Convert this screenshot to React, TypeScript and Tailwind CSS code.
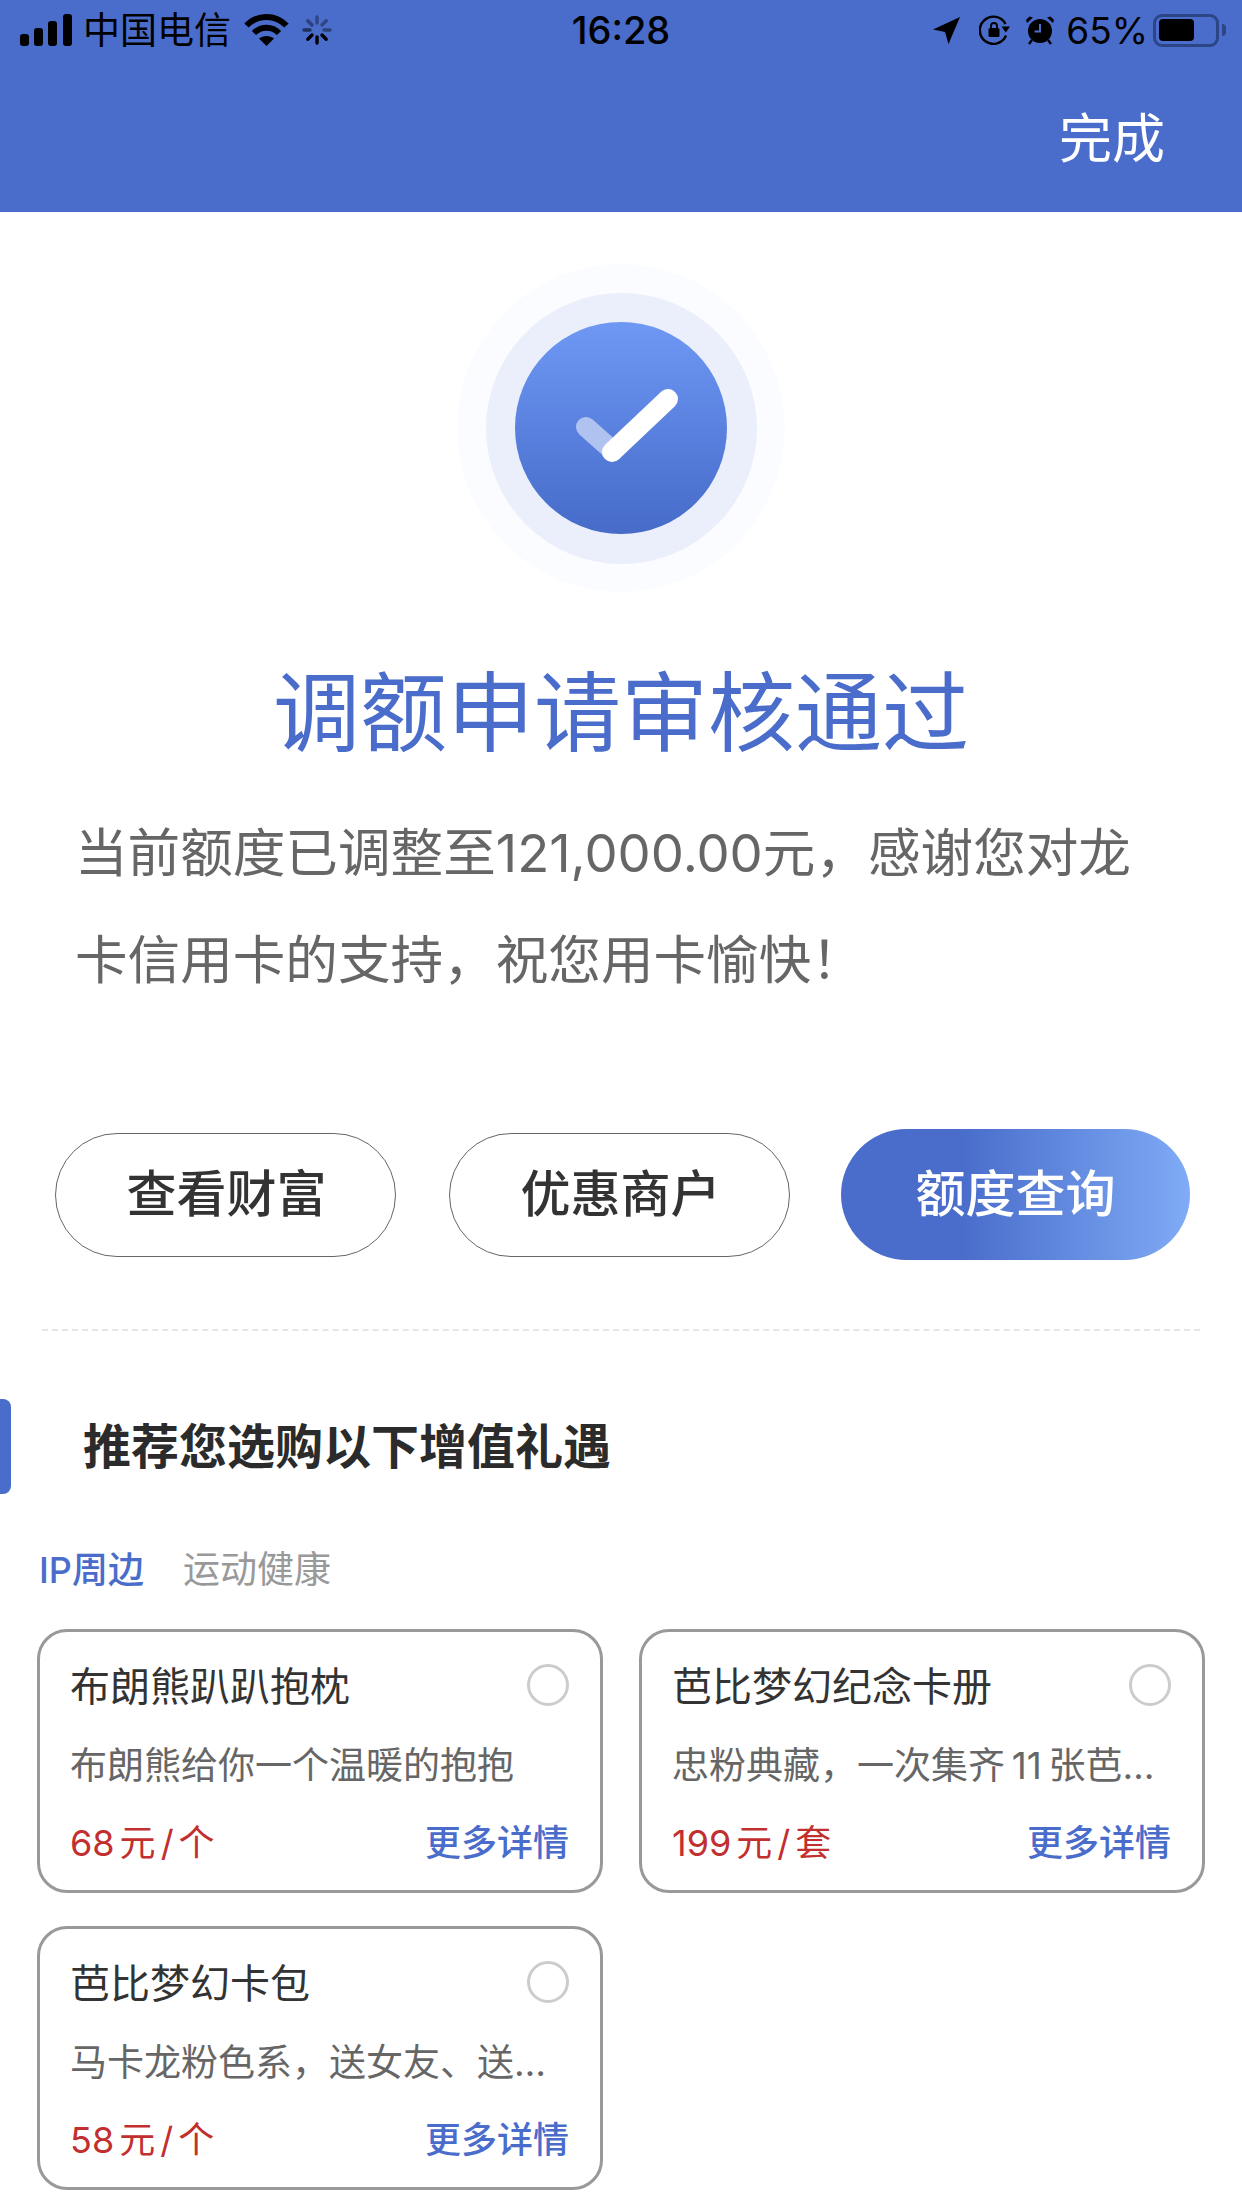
const font = "font-['Inter','Noto_Sans_CJK_SC',sans-serif]";

type Gift = {
  name: string;
  desc: string;
  price: string;
  unit: string;
};

const gifts: Gift[] = [
  { name: "布朗熊趴趴抱枕", desc: "布朗熊给你一个温暖的抱抱", price: "68", unit: "个" },
  { name: "芭比梦幻纪念卡册", desc: "忠粉典藏，一次集齐\u200911\u2009张芭…", price: "199", unit: "套" },
  { name: "芭比梦幻卡包", desc: "马卡龙粉色系，送女友、送…", price: "58", unit: "个" },
];

function StatusBar() {
  return (
    <div className="flex h-[60px] items-center pl-[20px] pr-[16px] text-[36px] leading-none text-black">
      <div className="flex flex-1 items-center">
        <svg width="52" height="32" viewBox="0 0 52 32" fill="#000">
          <rect x="0" y="20" width="9" height="12" rx="3" />
          <rect x="14" y="14" width="9" height="18" rx="3" />
          <rect x="28" y="7" width="9" height="25" rx="3" />
          <rect x="43" y="0" width="9" height="32" rx="3" />
        </svg>
        <span className="ml-[11px] text-[37px]">中国电信</span>
        <svg className="ml-[13px]" width="45" height="34" viewBox="0 0 45 34" fill="none" stroke="#000" strokeWidth="6">
          <path d="M2.5 12.5C13.5 1 31.5 1 42.5 12.5" />
          <path d="M10 20C17 13 28 13 35 20" />
          <path d="M22.5 33L15 25.5C19 22 26 22 30 25.5Z" fill="#000" stroke="none" />
        </svg>
        <svg className="ml-[13px]" width="30" height="30" viewBox="0 0 30 30" stroke="#000" strokeWidth="3.4" strokeLinecap="round">
          <path d="M15 2V8" opacity="0.35" />
          <path d="M24.2 5.8L20 10" opacity="0.35" />
          <path d="M28 15H22" opacity="0.4" />
          <path d="M24.2 24.2L20 20" />
          <path d="M15 28V22" />
          <path d="M5.8 24.2L10 20" />
          <path d="M2 15H8" opacity="0.55" />
          <path d="M5.8 5.8L10 10" opacity="0.4" />
        </svg>
      </div>
      <span className="mr-[4px] text-[38px] font-medium">16:28</span>
      <div className="flex flex-1 items-center justify-end">
        <svg width="27" height="27" viewBox="0 0 27 27" fill="#000">
          <path d="M27 0L15.5 27L12 15L0 12.5Z" />
        </svg>
        <svg className="ml-[19px]" width="32" height="30" viewBox="0 0 32 30" fill="none" stroke="#000" strokeWidth="2.4">
          <path d="M27 20.5A13.6 13.6 0 1 1 26.5 9" />
          <path d="M22.5 11.5H31L26.8 17.5Z" fill="#000" stroke="none" />
          <rect x="9.5" y="13" width="11" height="9" rx="1.5" fill="#000" stroke="none" />
          <path d="M12 13.5V11A3 3 0 0 1 18 11V13.5" strokeWidth="1.8" />
        </svg>
        <svg className="ml-[14px]" width="30" height="30" viewBox="0 0 30 30">
          <circle cx="15" cy="16" r="12" fill="#000" />
          <path d="M15 9V16.5H9.5" fill="none" stroke="#4a6dcb" strokeWidth="2" />
          <path d="M2 8L8 2.5L4.5 1.5L1 5Z" fill="#000" />
          <path d="M28 8L22 2.5L25.5 1.5L29 5Z" fill="#000" />
          <path d="M7 25L4 29M23 25L26 29" stroke="#000" strokeWidth="2.4" />
        </svg>
        <span className="ml-[11px] text-[37px] font-normal">65%</span>
        <div className="ml-[5px] flex items-center">
          <div className="flex h-[33px] w-[66px] items-center rounded-[9px] border-[3px] border-[#2b4585] p-[3px]">
            <div className="h-[22px] w-[35px] rounded-[4px] bg-black" />
          </div>
          <div className="ml-[3px] h-[12px] w-[4px] rounded-r-full bg-[#2b4585]" />
        </div>
      </div>
    </div>
  );
}

function SuccessBadge() {
  return (
    <div className="flex h-[328px] w-[328px] items-center justify-center rounded-full bg-[#fbfcff]">
      <div className="flex h-[271px] w-[271px] items-center justify-center rounded-full bg-[#ebeffb]">
        <div className="flex h-[212px] w-[212px] items-center justify-center rounded-full bg-gradient-to-b from-[#6f98f5] to-[#466bc9]">
          <svg width="212" height="212" viewBox="0 0 212 212" fill="none" strokeLinecap="round" strokeWidth="20">
            <path d="M71 105L98 129" stroke="#afc2f0" />
            <path d="M97 130L153 77" stroke="#fff" />
          </svg>
        </div>
      </div>
    </div>
  );
}

function GiftCard({ gift }: { gift: Gift }) {
  return (
    <div className="flex h-[264px] flex-col rounded-[30px] border-[3px] border-[#999] pl-[30px] pr-[31px] pt-[22px]">
      <div className="flex h-[66px] items-center justify-between">
        <span className="text-[40px] leading-none text-[#333]">{gift.name}</span>
        <span className="mb-[4px] h-[42px] w-[42px] rounded-full border-[3px] border-[#ccc]" />
      </div>
      <p className="mt-[21px] whitespace-nowrap text-[37px] leading-[50px] text-[#666]">{gift.desc}</p>
      <div className="mt-[27px] flex items-center justify-between text-[36px] leading-[50px]">
        <span className="flex gap-[5px] text-[#c22f2f]">
          <span>{gift.price}</span>
          <span>元</span>
          <span>/</span>
          <span>{gift.unit}</span>
        </span>
        <span className="font-medium text-[#4a6dcb]">更多详情</span>
      </div>
    </div>
  );
}

export default function App() {
  return (
    <div className={`h-[2208px] w-[1242px] overflow-hidden bg-white ${font}`}>
      <header className="h-[212px] bg-[#4a6dcb]">
        <StatusBar />
        <div className="flex h-[152px] justify-end pr-[77px] pt-[49px]">
          <span className="text-[53px] leading-[60px] text-white">完成</span>
        </div>
      </header>

      <div className="flex justify-center pt-[52px]">
        <SuccessBadge />
      </div>

      <h1 className="mt-[62px] text-center text-[87px] leading-[120px] text-[#4a6dcb]">调额申请审核通过</h1>

      <p className="mt-[26px] px-[75px] text-[52.6px] leading-[107px] text-[#666]">
        当前额度已调整至121,000.00元，感谢您对龙卡信用卡的支持，祝您用卡愉快！
      </p>

      <div className="mt-[115px] flex items-center pl-[55px]">
        <button className="h-[124px] w-[341px] rounded-full border-[1.5px] border-[#666] pl-[2px] text-[50px] font-medium text-[#333]">
          查看财富
        </button>
        <button className="ml-[53px] h-[124px] w-[341px] rounded-full border-[1.5px] border-[#666] pl-[2px] text-[50px] font-medium text-[#333]">
          优惠商户
        </button>
        <button className="ml-[51px] h-[131px] w-[349px] rounded-full bg-gradient-to-r from-[#4a6dcb] from-[35%] to-[#80abf6] text-[50px] font-medium text-white">
          额度查询
        </button>
      </div>

      <div className="mx-[42px] mt-[69px] border-t-2 border-dashed border-[#e6e6e6]" />

      <div className="mt-[68px] flex h-[95px] items-center">
        <div className="h-full w-[11px] rounded-r-[8px] bg-[#4a6dcb]" />
        <h2 className="ml-[72px] text-[48px] font-bold text-[#2b2b2b]">推荐您选购以下增值礼遇</h2>
      </div>

      <div className="mt-[51px] flex h-[50px] items-center gap-[39px] pl-[39px] text-[36px]">
        <span className="font-medium text-[#4a6dcb]">IP周边</span>
        <span className="text-[37px] text-[#999]">运动健康</span>
      </div>

      <div className="mt-[34px] grid grid-cols-[566px_566px] gap-x-[36px] gap-y-[33px] pl-[37px]">
        {gifts.map((gift) => (
          <GiftCard key={gift.name} gift={gift} />
        ))}
      </div>
    </div>
  );
}
